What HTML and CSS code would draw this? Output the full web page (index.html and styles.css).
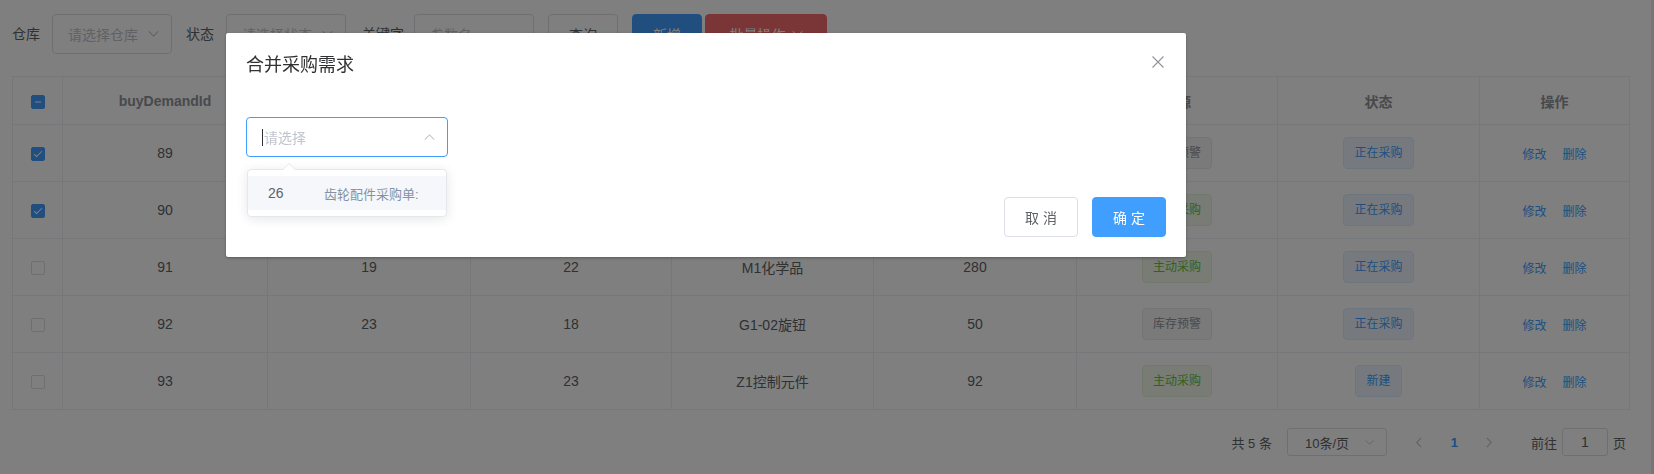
FILE: index.html
```html
<!DOCTYPE html>
<html lang="zh-CN">
<head>
<meta charset="utf-8">
<title>采购需求</title>
<link rel="stylesheet" href="styles.css">
</head>
<body>
<div class="app">
  <div class="main">
    <div class="toolbar">
      <span class="lbl">仓库</span>
      <div class="field sel w120"><span class="ph">请选择仓库</span><svg class="chev" viewBox="0 0 12 7"><path d="M0.5 0.5 L6 6 L11.5 0.5" /></svg></div>
      <span class="lbl m14">状态</span>
      <div class="field sel w120"><span class="ph">请选择状态</span><svg class="chev" viewBox="0 0 12 7"><path d="M0.5 0.5 L6 6 L11.5 0.5" /></svg></div>
      <span class="lbl m16 kw">关键字</span>
      <div class="field w120"><span class="ph">参数名</span></div>
      <button class="btn b-query">查询</button>
      <button class="btn primary b-add">新增</button>
      <button class="btn danger b-batch">批量操作<svg class="chev white" viewBox="0 0 12 7"><path d="M0.5 0.5 L6 6 L11.5 0.5" /></svg></button>
    </div>

    <table class="grid">
      <colgroup>
        <col class="c1"><col class="c2"><col class="c3"><col class="c4"><col class="c5"><col class="c6"><col class="c7"><col class="c8"><col class="c9">
      </colgroup>
      <thead>
        <tr>
          <th><span class="cb ind"></span></th>
          <th>buyDemandId</th>
          <th>warehouseId</th>
          <th>goodsId</th>
          <th>物品名称</th>
          <th>数量</th>
          <th>来源</th>
          <th>状态</th>
          <th>操作</th>
        </tr>
      </thead>
      <tbody>
        <tr>
          <td><span class="cb on"></span></td>
          <td>89</td><td>21</td><td>20</td><td>A1电子元件</td><td>150</td>
          <td><span class="tag info">库存预警</span></td>
          <td><span class="tag blue">正在采购</span></td>
          <td><span class="link">修改</span><span class="link">删除</span></td>
        </tr>
        <tr>
          <td><span class="cb on"></span></td>
          <td>90</td><td>22</td><td>21</td><td>B2轴承</td><td>60</td>
          <td><span class="tag green">主动采购</span></td>
          <td><span class="tag blue">正在采购</span></td>
          <td><span class="link">修改</span><span class="link">删除</span></td>
        </tr>
        <tr>
          <td><span class="cb"></span></td>
          <td>91</td><td>19</td><td>22</td><td>M1化学品</td><td>280</td>
          <td><span class="tag green">主动采购</span></td>
          <td><span class="tag blue">正在采购</span></td>
          <td><span class="link">修改</span><span class="link">删除</span></td>
        </tr>
        <tr>
          <td><span class="cb"></span></td>
          <td>92</td><td>23</td><td>18</td><td>G1-02旋钮</td><td>50</td>
          <td><span class="tag info">库存预警</span></td>
          <td><span class="tag blue">正在采购</span></td>
          <td><span class="link">修改</span><span class="link">删除</span></td>
        </tr>
        <tr>
          <td><span class="cb"></span></td>
          <td>93</td><td></td><td>23</td><td>Z1控制元件</td><td>92</td>
          <td><span class="tag green">主动采购</span></td>
          <td><span class="tag blue">新建</span></td>
          <td><span class="link">修改</span><span class="link">删除</span></td>
        </tr>
      </tbody>
    </table>

    <div class="pager">
      <span class="total">共 5 条</span>
      <div class="sizes"><span>10条/页</span><svg class="chev sm" viewBox="0 0 12 7"><path d="M0.5 0.5 L6 6 L11.5 0.5" /></svg></div>
      <span class="pbtn"><svg class="arrow" viewBox="0 0 7 12"><path d="M6 0.5 L0.8 6 L6 11.5" /></svg></span>
      <span class="pnum">1</span>
      <span class="pbtn"><svg class="arrow" viewBox="0 0 7 12"><path d="M1 0.5 L6.2 6 L1 11.5" /></svg></span>
      <span class="jump">前往</span>
      <div class="jinput">1</div>
      <span class="jpage">页</span>
    </div>
  </div>
  <div class="edge"></div>
</div>

<div class="mask"></div>

<div class="dialog">
  <div class="dlg-head">
    <span class="dlg-title">合并采购需求</span>
    <svg class="dlg-close" viewBox="0 0 12 12"><path d="M0.5 0.5 L11.5 11.5 M11.5 0.5 L0.5 11.5" /></svg>
  </div>
  <div class="dlg-body">
    <div class="dsel">
      <span class="caret"></span><span class="ph">请选择</span>
      <svg class="chev up" viewBox="0 0 12 7"><path d="M0.5 6.5 L6 1 L11.5 6.5" /></svg>
    </div>
  </div>
  <div class="dlg-foot">
    <button class="btn">取 消</button>
    <button class="btn primary">确 定</button>
  </div>
</div>

<div class="popper">
  <div class="opt hover"><span class="opt-id">26</span><span class="opt-name">齿轮配件采购单:</span></div>
</div>
</body>
</html>
```
FILE: styles.css
```css
* { box-sizing: border-box; }
html, body { margin: 0; padding: 0; }
body {
  font-family: "Liberation Sans", "Noto Sans CJK SC", sans-serif;
  font-size: 14px;
  color: #606266;
  background: #fff;
  width: 1654px;
  height: 474px;
  overflow: hidden;
}
.app { display: flex; height: 474px; }
.main { flex: 1; padding: 14px 21px 0 12px; }
.edge { width: 4px; background: #ececec; }

/* toolbar */
.toolbar { display: flex; align-items: center; height: 40px; margin-bottom: 22px; }
.lbl { color: #606266; font-size: 14px; margin-right: 12px; line-height: 40px; }
.lbl.m14 { margin-left: 14px; }
.lbl.m16 { margin-left: 16px; }
.lbl.kw { margin-right: 10px; }
.field {
  height: 40px; border: 1px solid #dcdfe6; border-radius: 4px; background: #fff;
  display: flex; align-items: center; padding: 0 12px 0 15px; position: relative;
}
.w120 { width: 120px; }
.ph { color: #c0c4cc; font-size: 14px; white-space: nowrap; }
.sel .chev { margin-left: auto; }
.chev { width: 11px; height: 6px; flex: none; fill: none; stroke: #c0c4cc; stroke-width: 1.2; }
.chev.white { stroke: #fff; margin-left: 6px; }
.chev.sm { width: 9px; height: 5px; }

.btn {
  height: 40px; padding: 0 20px; border: 1px solid #dcdfe6; border-radius: 4px;
  background: #fff; color: #606266; font-family: inherit; font-size: 14px;
  display: inline-flex; align-items: center; justify-content: center; white-space: nowrap;
}
.btn.primary { background: #409eff; border-color: #409eff; color: #fff; }
.btn.danger { background: #f56c6c; border-color: #f56c6c; color: #fff; }
.b-query { margin-left: 14px; width: 70px; }
.b-add { margin-left: 14px; width: 70px; }
.b-batch { margin-left: 3px; width: 122px; }

/* table */
.grid {
  width: 1617px; border-collapse: collapse; table-layout: fixed;
  border: 1px solid #ebeef5;
}
.c1 { width: 50px; } .c2 { width: 205px; } .c3 { width: 203px; } .c4 { width: 201px; }
.c5 { width: 202px; } .c6 { width: 203px; } .c7 { width: 201px; } .c8 { width: 202px; } .c9 { width: 150px; }
.grid th, .grid td {
  border: 1px solid #ebeef5; text-align: center; padding: 0; vertical-align: middle;
}
.grid th { height: 48px; color: #909399; font-weight: bold; font-size: 14px; }
.grid td { height: 57px; color: #606266; font-size: 14px; }

.cb {
  display: inline-block; width: 14px; height: 14px; border: 1px solid #dcdfe6; border-radius: 2px;
  background: #fff; position: relative; vertical-align: middle;
}
.cb.on, .cb.ind { background: #409eff; border-color: #409eff; }
.cb.on::after {
  content: ""; position: absolute; left: 4px; top: 1px; width: 3px; height: 7px;
  border: 1px solid #fff; border-left: 0; border-top: 0; transform: rotate(45deg);
}
.cb.ind::before {
  content: ""; position: absolute; left: 0; right: 0; top: 5px; height: 2px;
  background: #fff; transform: scale(0.5);
}

.tag {
  display: inline-block; height: 32px; line-height: 30px; padding: 0 10px; font-size: 12px;
  border: 1px solid; border-radius: 4px; white-space: nowrap; vertical-align: middle;
}
.tag.info { background: #f4f4f5; border-color: #e9e9eb; color: #909399; }
.tag.green { background: #f0f9eb; border-color: #e1f3d8; color: #67c23a; }
.tag.blue { background: #ecf5ff; border-color: #d9ecff; color: #409eff; }
.link { color: #409eff; font-size: 12px; }
.link + .link { margin-left: 16px; }

/* pager */
.pager {
  display: flex; align-items: center; justify-content: flex-end; height: 28px;
  margin-top: 18px; padding-right: 3px; font-size: 13px; color: #606266; width: 1617px;
}
.total { margin-right: 15px; }
.sizes {
  width: 100px; height: 28px; border: 1px solid #dcdfe6; border-radius: 3px; display: flex;
  align-items: center; padding: 0 12px 0 17px; justify-content: space-between; margin-right: 15px;
}
.pbtn { width: 35px; display: flex; justify-content: center; align-items: center; height: 28px; }
.arrow { width: 6px; height: 11px; fill: none; stroke: #c0c4cc; stroke-width: 1.3; }
.pnum { width: 35px; text-align: center; color: #409eff; font-weight: bold; }
.jump { margin-left: 24px; }
.jinput {
  width: 46px; height: 28px; border: 1px solid #dcdfe6; border-radius: 3px; margin: 0 5px;
  display: flex; align-items: center; justify-content: center; font-size: 14px;
}

/* mask + dialog */
.mask { position: fixed; inset: 0; background: rgba(0, 0, 0, 0.5); }
.dialog {
  position: absolute; left: 226px; top: 33px; width: 960px; background: #fff;
  border-radius: 2px; box-shadow: 0 1px 3px rgba(0, 0, 0, 0.3);
}
.dlg-head { padding: 20px 20px 10px; position: relative; }
.dlg-title { font-size: 18px; line-height: 24px; color: #303133; display: block; }
.dlg-close {
  position: absolute; top: 23px; right: 22px; width: 12px; height: 12px;
  fill: none; stroke: #909399; stroke-width: 1.1;
}
.dlg-body { padding: 30px 20px; }
.dsel {
  width: 202px; height: 40px; border: 1px solid #409eff; border-radius: 4px;
  display: flex; align-items: center; padding: 0 12px 0 15px;
}
.caret { width: 1px; height: 17px; background: #303133; margin-right: 1px; }
.chev.up { margin-left: auto; }
.dlg-foot { padding: 10px 20px 20px; display: flex; justify-content: flex-end; gap: 14px; }
.dlg-foot .btn { width: 74px; padding: 0; }

.popper {
  position: absolute; left: 247px; top: 169px; width: 200px; background: #fff;
  border: 1px solid #e4e7ed; border-radius: 4px; box-shadow: 0 2px 12px rgba(0, 0, 0, 0.1);
  padding: 6px 0;
}
.popper::before {
  content: ""; position: absolute; left: 34px; top: -7px; width: 0; height: 0;
  border-left: 7px solid transparent; border-right: 7px solid transparent; border-bottom: 7px solid #e4e7ed;
}
.popper::after {
  content: ""; position: absolute; left: 35px; top: -6px; width: 0; height: 0;
  border-left: 6px solid transparent; border-right: 6px solid transparent; border-bottom: 6px solid #fff;
}
.opt { height: 34px; display: flex; align-items: center; padding: 0 20px; }
.opt.hover { background: #f5f7fa; }
.opt-id { width: 56px; color: #606266; font-size: 14px; }
.opt-name { color: #8492a6; font-size: 13px; white-space: nowrap; }
```
